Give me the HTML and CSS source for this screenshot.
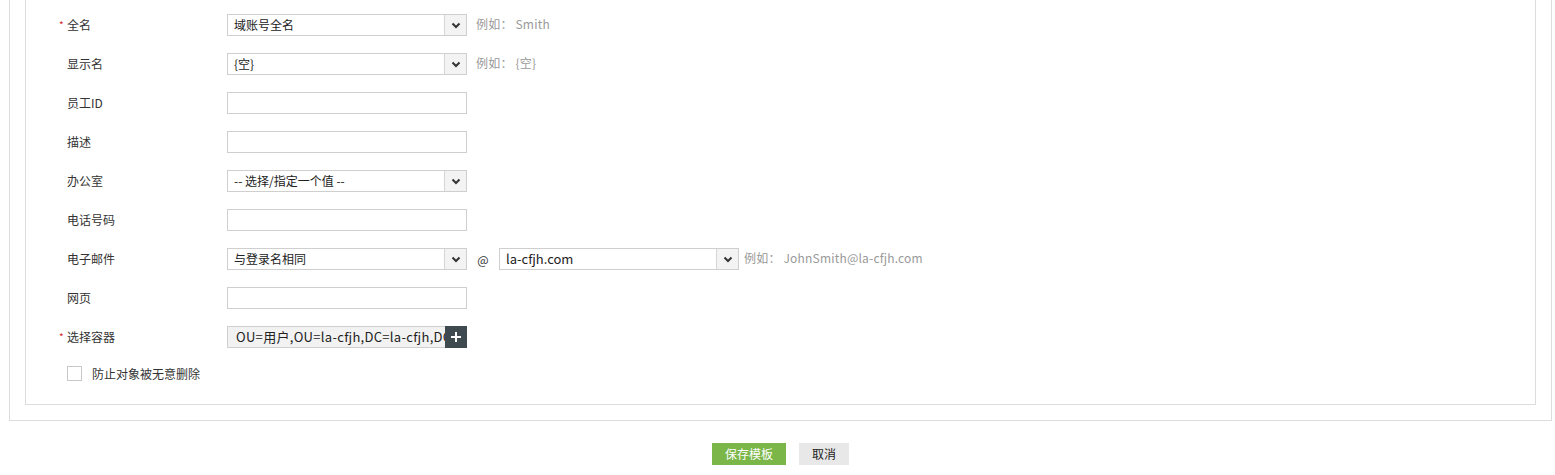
FILE: index.html
```html
<!DOCTYPE html>
<html lang="zh-CN">
<head>
<meta charset="utf-8">
<title>模板</title>
<link rel="stylesheet" href="styles.css">
</head>
<body>
<div class="outer">
  <div class="inner">
    <div class="row">
      <div class="label"><span class="star">*</span>全名</div>
      <div class="select"><span class="sel-text">域账号全名</span><span class="arrow"><svg width="10" height="7" viewBox="0 0 10 7"><path d="M1.5 1.5 L5 5 L8.5 1.5" fill="none" stroke="#333" stroke-width="2"/></svg></span></div>
      <span class="hint">例如： Smith</span>
    </div>
    <div class="row">
      <div class="label"><span class="star"></span>显示名</div>
      <div class="select"><span class="sel-text">{空}</span><span class="arrow"><svg width="10" height="7" viewBox="0 0 10 7"><path d="M1.5 1.5 L5 5 L8.5 1.5" fill="none" stroke="#333" stroke-width="2"/></svg></span></div>
      <span class="hint">例如： {空}</span>
    </div>
    <div class="row">
      <div class="label"><span class="star"></span>员工ID</div>
      <div class="input"></div>
    </div>
    <div class="row">
      <div class="label"><span class="star"></span>描述</div>
      <div class="input"></div>
    </div>
    <div class="row">
      <div class="label"><span class="star"></span>办公室</div>
      <div class="select"><span class="sel-text">-- 选择/指定一个值 --</span><span class="arrow"><svg width="10" height="7" viewBox="0 0 10 7"><path d="M1.5 1.5 L5 5 L8.5 1.5" fill="none" stroke="#333" stroke-width="2"/></svg></span></div>
    </div>
    <div class="row">
      <div class="label"><span class="star"></span>电话号码</div>
      <div class="input"></div>
    </div>
    <div class="row">
      <div class="label"><span class="star"></span>电子邮件</div>
      <div class="select"><span class="sel-text">与登录名相同</span><span class="arrow"><svg width="10" height="7" viewBox="0 0 10 7"><path d="M1.5 1.5 L5 5 L8.5 1.5" fill="none" stroke="#333" stroke-width="2"/></svg></span></div>
      <span class="at">@</span>
      <div class="select"><span class="sel-text big">la-cfjh.com</span><span class="arrow"><svg width="10" height="7" viewBox="0 0 10 7"><path d="M1.5 1.5 L5 5 L8.5 1.5" fill="none" stroke="#333" stroke-width="2"/></svg></span></div>
      <span class="hint hint-near">例如： JohnSmith@la-cfjh.com</span>
    </div>
    <div class="row">
      <div class="label"><span class="star"></span>网页</div>
      <div class="input"></div>
    </div>
    <div class="row">
      <div class="label"><span class="star">*</span>选择容器</div>
      <div class="container">
        <span class="cont-text">OU=用户,OU=la-cfjh,DC=la-cfjh,DC=com</span>
        <span class="plus"><svg width="10" height="10" viewBox="0 0 10 10"><path d="M5 0 V10 M0 5 H10" stroke="#fff" stroke-width="2"/></svg></span>
      </div>
    </div>
    <div class="check-row">
      <span class="checkbox"></span>
      <span class="check-label">防止对象被无意删除</span>
    </div>
  </div>
</div>
<div class="buttons">
  <span class="btn btn-save">保存模板</span>
  <span class="btn btn-cancel">取消</span>
</div>
</body>
</html>
```

FILE: styles.css
```css
html, body {
  margin: 0;
  padding: 0;
  background: #fff;
}
body {
  font-family: "Noto Sans CJK SC", "Liberation Sans", sans-serif;
  font-size: 12px;
  color: #333;
}
.outer {
  margin-left: 9px;
  width: 1543px;
  border: 1px solid #dcdcdc;
  border-top: none;
  padding: 0 15px 15px 15px;
  box-sizing: border-box;
}
.inner {
  border: 1px solid #dcdcdc;
  border-top: none;
  padding: 14px 0 23px 33px;
  display: flex;
  flex-direction: column;
  gap: 17px;
}
.row {
  display: flex;
  align-items: center;
  height: 22px;
}
.label {
  width: 168px;
  display: flex;
  align-items: center;
  line-height: 22px;
  color: #333;
}
.star {
  display: inline-block;
  width: 8px;
  color: #d9232d;
  font-size: 10px;
  line-height: 10px;
}
.select {
  width: 240px;
  height: 22px;
  box-sizing: border-box;
  border: 1px solid #cfcfcf;
  display: flex;
  align-items: stretch;
  background: #fff;
}
.sel-text {
  flex: 1;
  padding-left: 6px;
  line-height: 20px;
  color: #222;
  white-space: nowrap;
  overflow: hidden;
}
.sel-text.big {
  font-size: 13px;
}
.arrow {
  width: 21px;
  border-left: 1px solid #d6d6d6;
  background: #f3f3f3;
  display: flex;
  align-items: center;
  justify-content: center;
}
.input {
  width: 240px;
  height: 22px;
  box-sizing: border-box;
  border: 1px solid #cfcfcf;
  background: #fff;
}
.hint {
  margin-left: 9px;
  color: #999;
  line-height: 22px;
  margin-top: -3px;
  white-space: nowrap;
  letter-spacing: 0.2px;
}
.hint-near {
  margin-left: 5px;
}
.at {
  width: 32px;
  text-align: center;
  color: #333;
  font-size: 12px;
}
.container {
  width: 240px;
  height: 22px;
  display: flex;
}
.cont-text {
  width: 218px;
  box-sizing: border-box;
  border: 1px solid #cfcfcf;
  border-right: none;
  background: #f2f2f2;
  font-size: 13px;
  letter-spacing: 0.3px;
  line-height: 20px;
  padding-left: 8px;
  white-space: nowrap;
  overflow: hidden;
  color: #222;
}
.plus {
  width: 22px;
  background: #3e4950;
  display: flex;
  align-items: center;
  justify-content: center;
}
.check-row {
  display: flex;
  align-items: center;
  height: 16px;
  padding-left: 8px;
}
.checkbox {
  width: 15px;
  height: 15px;
  box-sizing: border-box;
  border: 1px solid #c8c8c8;
  background: #fff;
}
.check-label {
  margin-left: 10px;
  color: #333;
}
.buttons {
  display: flex;
  justify-content: center;
  gap: 13px;
  margin-top: 22px;
  padding-left: 6px;
}
.btn {
  height: 22px;
  line-height: 22px;
  text-align: center;
  font-size: 12px;
}
.btn-save {
  width: 74px;
  background: #7ab648;
  color: #fff;
}
.btn-cancel {
  width: 50px;
  background: #e8e8e8;
  color: #222;
}
```
